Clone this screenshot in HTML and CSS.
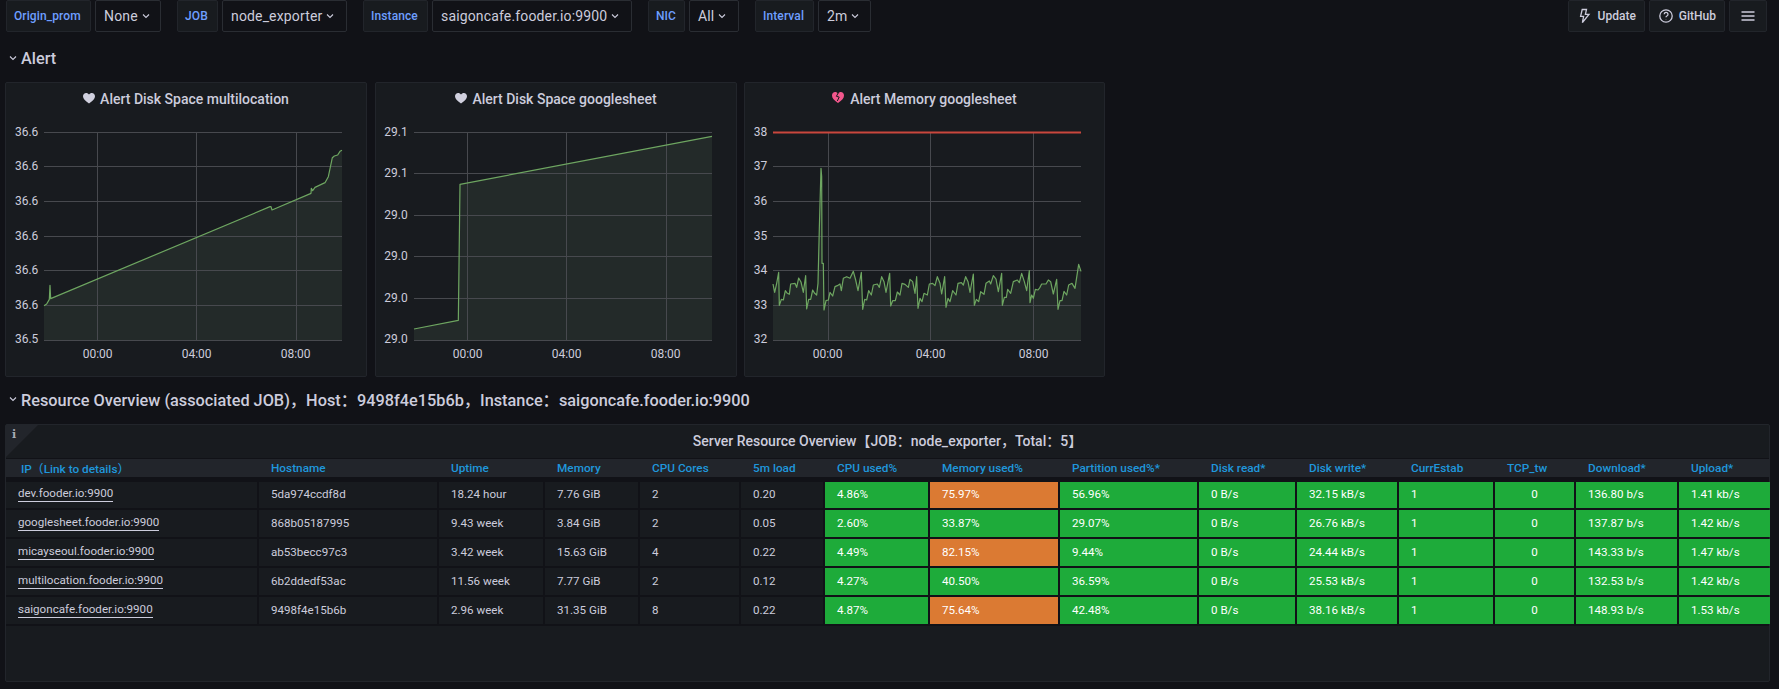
FILE: index.html
```html
<!DOCTYPE html>
<html lang="en">
<head>
<meta charset="utf-8">
<title>Node Exporter</title>
<link rel="stylesheet" href="styles.css">
</head>
<body>
<header class="toolbar">
  <div class="vars">
    <div class="var"><span class="var-label w85">Origin_prom</span><span class="var-value w66">None<svg class="caret" viewBox="0 0 10 10"><path d="M2 3.5 5 6.5 8 3.5"/></svg></span></div>
    <div class="var"><span class="var-label w41">JOB</span><span class="var-value w125">node_exporter<svg class="caret" viewBox="0 0 10 10"><path d="M2 3.5 5 6.5 8 3.5"/></svg></span></div>
    <div class="var"><span class="var-label w65">Instance</span><span class="var-value w200">saigoncafe.fooder.io:9900<svg class="caret" viewBox="0 0 10 10"><path d="M2 3.5 5 6.5 8 3.5"/></svg></span></div>
    <div class="var"><span class="var-label w37">NIC</span><span class="var-value w50">All<svg class="caret" viewBox="0 0 10 10"><path d="M2 3.5 5 6.5 8 3.5"/></svg></span></div>
    <div class="var"><span class="var-label w59">Interval</span><span class="var-value w53">2m<svg class="caret" viewBox="0 0 10 10"><path d="M2 3.5 5 6.5 8 3.5"/></svg></span></div>
  </div>
  <div class="links">
    <a class="link"><svg class="link-icon" viewBox="0 0 16 16"><path d="M9.5 1.5H5.2L3.6 8.3h3l-1.2 6.2 6.6-8.2H8.4z"/></svg>Update</a>
    <a class="link"><svg class="link-icon" viewBox="0 0 16 16"><circle cx="8" cy="8" r="6.2"/><path d="M6.2 6.3a1.9 1.9 0 1 1 2.7 1.7c-.6.3-.9.7-.9 1.3"/><path d="M8 11.2v.4"/></svg>GitHub</a>
    <a class="link link-menu"><svg class="link-icon" viewBox="0 0 16 16"><path d="M1.500 4h13M1.500 8h13M1.500 12h13"/></svg></a>
  </div>
</header>

<section class="row-title row-alert"><svg class="caret" viewBox="0 0 10 10"><path d="M2 3.5 5 6.5 8 3.5"/></svg>Alert</section>

<section class="panels">
  <article class="panel panel-a">
    <h3 class="panel-title"><svg class="heart" viewBox="0 0 12 10.500"><path d="M6 10.500C2 7.600 0 5.800 0 3.300 0 1.300 1.400 0 3.100 0 4.300 0 5.400.6 6 1.600 6.600.6 7.700 0 8.900 0 10.600 0 12 1.300 12 3.300 12 5.800 10 7.600 6 10.500z"/></svg>Alert Disk Space multilocation</h3>
    <svg class="chart" viewBox="18 114 1080 777">
      <path class="fill" d="M132 781V677L140 672 148 658 150 616 152 656 810 380 813 380 816 390 933 340 934 325 938 332 945 322 975 308 985 290 997 233 1003 228 1013 225 1020 214 1026 211V781Z"/>
      <path class="grid" d="M132 157.500H1026M132 259.500H1026M132 364.500H1026M132 469.500H1026M132 571.500H1026M132 676.500H1026M132 781.500H1026M292.500 156V781M589.500 156V781M889.500 156V781"/>
      <path class="line" d="M132 677 140 672 148 658 150 616 152 656 810 380 813 380 816 390 933 340 934 325 938 332 945 322 975 308 985 290 997 233 1003 228 1013 225 1020 214 1026 211"/>
      <g class="ylabels"><text x="115" y="168">36.6</text><text x="115" y="271">36.6</text><text x="115" y="376">36.6</text><text x="115" y="481">36.6</text><text x="115" y="583">36.6</text><text x="115" y="688">36.6</text><text x="115" y="790">36.5</text></g>
      <g class="xlabels"><text x="293" y="833">00:00</text><text x="590" y="833">04:00</text><text x="887" y="833">08:00</text></g>
    </svg>
  </article>
  <article class="panel panel-b">
    <h3 class="panel-title"><svg class="heart" viewBox="0 0 12 10.500"><path d="M6 10.500C2 7.600 0 5.800 0 3.300 0 1.300 1.400 0 3.100 0 4.300 0 5.400.6 6 1.600 6.600.6 7.700 0 8.900 0 10.600 0 12 1.300 12 3.300 12 5.800 10 7.600 6 10.500z"/></svg>Alert Disk Space googlesheet</h3>
    <svg class="chart" viewBox="18 114 1080 777">
      <path class="fill" d="M132 781V747L265 721 270 313 1026 169V781Z"/>
      <path class="grid" d="M132 157.500H1026M132 280.500H1026M132 406.500H1026M132 529.500H1026M132 655.500H1026M132 781.500H1026M292.500 156V781M589.500 156V781M889.500 156V781"/>
      <path class="line" d="M132 747 265 721 270 313 1026 169"/>
      <g class="ylabels"><text x="113" y="168">29.1</text><text x="113" y="292">29.1</text><text x="113" y="418">29.0</text><text x="113" y="541">29.0</text><text x="113" y="667">29.0</text><text x="113" y="790">29.0</text></g>
      <g class="xlabels"><text x="293" y="833">00:00</text><text x="590" y="833">04:00</text><text x="887" y="833">08:00</text></g>
    </svg>
  </article>
  <article class="panel panel-c">
    <h3 class="panel-title"><svg class="heart heart-broken" viewBox="0 0 12 11"><path d="M6 11C2 8 0 6.100 0 3.400 0 1.400 1.400 0 3.100 0 4.300 0 5.400.6 6 1.700 6.600.6 7.700 0 8.900 0 10.600 0 12 1.400 12 3.400 12 6.100 10 8 6 11z"/><path class="crack" d="M6.300 .8 4.400 4.300 7.200 5.100 5.300 9"/></svg>Alert Memory googlesheet</h3>
    <svg class="chart" viewBox="15 114 1077 777">
      <path class="fill" d="M99 781V612L104 637 110 610 116 577 118 676 124 658 130 660 136 632 142 640 148 643 152 612 165 610 170 622 176 594 183 606 190 637 197 587 200 687 206 658 212 658 218 630 224 640 230 645 234 610 238 445 243 265 245 290 246 550 250 550 252 690 258 662 265 660 270 637 278 648 285 620 292 617 300 612 304 632 310 595 320 590 330 595 340 574 347 600 354 632 364 577 368 688 374 658 380 660 386 632 394 645 400 615 412 612 418 622 425 590 432 605 438 637 449 580 452 678 458 662 466 662 472 636 480 645 486 610 495 613 505 622 510 598 518 605 525 640 530 590 534 685 540 655 546 665 552 640 562 645 568 612 578 610 585 617 592 590 600 610 605 642 614 590 618 682 624 655 630 665 638 632 648 645 654 610 664 608 670 615 677 590 684 605 690 637 700 582 703 676 709 658 716 665 722 635 732 643 738 610 748 603 752 612 760 587 768 597 775 635 785 580 787 676 793 652 799 652 803 628 812 640 820 605 832 600 838 608 845 580 853 605 860 632 868 572 870 668 875 645 880 655 886 628 894 630 900 622 905 612 918 612 925 600 932 605 940 642 950 598 954 688 960 662 966 662 972 634 980 645 986 615 996 610 1005 625 1016 553 1023 574V781Z"/>
      <path class="grid" d="M99 259.500H1023M99 364.500H1023M99 469.500H1023M99 571.500H1023M99 676.500H1023M99 781.500H1023M265.500 156V781M571.500 156V781M880.500 156V781"/>
      <path class="threshold" d="M99 157.500H1023"/>
      <path class="line" d="M99 612 104 637 110 610 116 577 118 676 124 658 130 660 136 632 142 640 148 643 152 612 165 610 170 622 176 594 183 606 190 637 197 587 200 687 206 658 212 658 218 630 224 640 230 645 234 610 238 445 243 265 245 290 246 550 250 550 252 690 258 662 265 660 270 637 278 648 285 620 292 617 300 612 304 632 310 595 320 590 330 595 340 574 347 600 354 632 364 577 368 688 374 658 380 660 386 632 394 645 400 615 412 612 418 622 425 590 432 605 438 637 449 580 452 678 458 662 466 662 472 636 480 645 486 610 495 613 505 622 510 598 518 605 525 640 530 590 534 685 540 655 546 665 552 640 562 645 568 612 578 610 585 617 592 590 600 610 605 642 614 590 618 682 624 655 630 665 638 632 648 645 654 610 664 608 670 615 677 590 684 605 690 637 700 582 703 676 709 658 716 665 722 635 732 643 738 610 748 603 752 612 760 587 768 597 775 635 785 580 787 676 793 652 799 652 803 628 812 640 820 605 832 600 838 608 845 580 853 605 860 632 868 572 870 668 875 645 880 655 886 628 894 630 900 622 905 612 918 612 925 600 932 605 940 642 950 598 954 688 960 662 966 662 972 634 980 645 986 615 996 610 1005 625 1016 553 1023 574"/>
      <g class="ylabels"><text x="82" y="168">38</text><text x="82" y="271">37</text><text x="82" y="376">36</text><text x="82" y="481">35</text><text x="82" y="583">34</text><text x="82" y="688">33</text><text x="82" y="790">32</text></g>
      <g class="xlabels"><text x="263" y="833">00:00</text><text x="572" y="833">04:00</text><text x="881" y="833">08:00</text></g>
    </svg>
  </article>
</section>

<section class="row-title row-resource"><svg class="caret" viewBox="0 0 10 10"><path d="M2 3.5 5 6.5 8 3.5"/></svg>Resource Overview (associated JOB)，Host：9498f4e15b6b，Instance：saigoncafe.fooder.io:9900</section>

<section class="table-panel">
  <div class="corner"><span class="corner-i">i</span></div>
  <h3 class="table-title">Server Resource Overview【JOB：node_exporter，Total：5】</h3>
  <div class="table">
    <div class="thead">
      <span class="th th-ip">IP（Link to details）</span><span class="th">Hostname</span><span class="th">Uptime</span><span class="th">Memory</span><span class="th">CPU Cores</span><span class="th">5m load</span><span class="th">CPU used%</span><span class="th">Memory used%</span><span class="th">Partition used%*</span><span class="th">Disk read*</span><span class="th">Disk write*</span><span class="th">CurrEstab</span><span class="th">TCP_tw</span><span class="th">Download*</span><span class="th">Upload*</span>
    </div>
    <div class="tr">
      <span class="td td-ip"><a>dev.fooder.io:9900</a></span><span class="td">5da974ccdf8d</span><span class="td">18.24 hour</span><span class="td">7.76 GiB</span><span class="td">2</span><span class="td">0.20</span><span class="td ok">4.86%</span><span class="td warn">75.97%</span><span class="td ok">56.96%</span><span class="td ok">0 B/s</span><span class="td ok">32.15 kB/s</span><span class="td ok">1</span><span class="td ok mid">0</span><span class="td ok">136.80 b/s</span><span class="td ok">1.41 kb/s</span>
    </div>
    <div class="tr">
      <span class="td td-ip"><a>googlesheet.fooder.io:9900</a></span><span class="td">868b05187995</span><span class="td">9.43 week</span><span class="td">3.84 GiB</span><span class="td">2</span><span class="td">0.05</span><span class="td ok">2.60%</span><span class="td ok">33.87%</span><span class="td ok">29.07%</span><span class="td ok">0 B/s</span><span class="td ok">26.76 kB/s</span><span class="td ok">1</span><span class="td ok mid">0</span><span class="td ok">137.87 b/s</span><span class="td ok">1.42 kb/s</span>
    </div>
    <div class="tr">
      <span class="td td-ip"><a>micayseoul.fooder.io:9900</a></span><span class="td">ab53becc97c3</span><span class="td">3.42 week</span><span class="td">15.63 GiB</span><span class="td">4</span><span class="td">0.22</span><span class="td ok">4.49%</span><span class="td warn">82.15%</span><span class="td ok">9.44%</span><span class="td ok">0 B/s</span><span class="td ok">24.44 kB/s</span><span class="td ok">1</span><span class="td ok mid">0</span><span class="td ok">143.33 b/s</span><span class="td ok">1.47 kb/s</span>
    </div>
    <div class="tr">
      <span class="td td-ip"><a>multilocation.fooder.io:9900</a></span><span class="td">6b2ddedf53ac</span><span class="td">11.56 week</span><span class="td">7.77 GiB</span><span class="td">2</span><span class="td">0.12</span><span class="td ok">4.27%</span><span class="td ok">40.50%</span><span class="td ok">36.59%</span><span class="td ok">0 B/s</span><span class="td ok">25.53 kB/s</span><span class="td ok">1</span><span class="td ok mid">0</span><span class="td ok">132.53 b/s</span><span class="td ok">1.42 kb/s</span>
    </div>
    <div class="tr">
      <span class="td td-ip"><a>saigoncafe.fooder.io:9900</a></span><span class="td">9498f4e15b6b</span><span class="td">2.96 week</span><span class="td">31.35 GiB</span><span class="td">8</span><span class="td">0.22</span><span class="td ok">4.87%</span><span class="td warn">75.64%</span><span class="td ok">42.48%</span><span class="td ok">0 B/s</span><span class="td ok">38.16 kB/s</span><span class="td ok">1</span><span class="td ok mid">0</span><span class="td ok">148.93 b/s</span><span class="td ok">1.53 kb/s</span>
    </div>
  </div>
</section>
</body>
</html>
```
FILE: styles.css
```css
* { box-sizing: border-box; }
html, body { margin: 0; padding: 0; }
body {
  width: 1779px;
  height: 689px;
  overflow: hidden;
  background: #111217;
  color: #ccccdc;
  font-family: Roboto, "Noto Sans CJK SC", sans-serif;
  font-size: 14px;
}
.toolbar {
  display: flex;
  justify-content: space-between;
  height: 32px;
  padding: 0 12px 0 6px;
}
.vars { display: flex; gap: 16px; }
.var { display: flex; gap: 4px; }
.w37 { width: 37px; }
.w41 { width: 41px; }
.w50 { width: 50px; }
.w53 { width: 53px; }
.w59 { width: 59px; }
.w65 { width: 65px; }
.w66 { width: 66px; }
.w85 { width: 85px; }
.w125 { width: 125px; }
.w200 { width: 200px; }
.var-label {
  display: flex;
  align-items: center;
  padding-left: 7px;
  background: #181b1f;
  border: 1px solid #22252b;
  border-radius: 2px;
  color: #6e9fff;
  font-size: 12px;
  font-weight: 500;
  letter-spacing: .1px;
  white-space: nowrap;
}
.var-value {
  display: flex;
  align-items: center;
  gap: 3px;
  padding-left: 8px;
  background: #111217;
  border: 1px solid #2a2d33;
  border-radius: 2px;
  color: #ccccdc;
  font-size: 14px;
  letter-spacing: .15px;
  white-space: nowrap;
}
.caret {
  width: 10px;
  height: 10px;
  fill: none;
  stroke: #ccccdc;
  stroke-width: 1.100;
}
.links { display: flex; gap: 4px; }
.link {
  display: flex;
  align-items: center;
  gap: 5px;
  padding: 0 8px;
  background: #181b1f;
  border: 1px solid #22252b;
  border-radius: 2px;
  color: #ccccdc;
  font-size: 12px;
  font-weight: 500;
}
.link-menu { width: 38px; justify-content: center; }
.link-icon {
  width: 16px;
  height: 16px;
  fill: none;
  stroke: #ccccdc;
  stroke-width: 1.300;
}
.row-title {
  display: flex;
  align-items: center;
  gap: 3px;
  padding-left: 8px;
  color: #ccccdc;
  font-size: 16.300px;
  font-weight: 500;
}
.row-alert { height: 26px; margin-top: 13px; }
.row-resource { height: 26px; margin-top: 9px; }
.panels { display: flex; gap: 8px; padding-left: 5px; margin-top: 11px; }
.panel {
  width: 362px;
  height: 295px;
  background: #181b1f;
  border: 1px solid #22252b;
  border-radius: 2px;
}
.panel-c { width: 361px; margin-left: -1px; }
.panel-title {
  display: flex;
  align-items: center;
  justify-content: center;
  gap: 5px;
  height: 35px;
  padding-bottom: 3px;
  margin: 0;
  color: #ccccdc;
  font-size: 14px;
  font-weight: 500;
}
.heart { width: 12px; height: 10.500px; margin-top: -1px; fill: #d0d0de; }
.heart-broken { height: 11px; margin-top: -4px; margin-right: 1px; fill: #f2578c; }
.crack { fill: none; stroke: #181b1f; stroke-width: 1; }
.chart { display: block; width: 360px; height: 259px; }
.panel-c .chart { width: 359px; }
.fill { fill: #232a29; stroke: none; }
.grid { fill: none; stroke: #47494e; stroke-width: 3; }
.line { fill: none; stroke: #6ea661; stroke-width: 3.600; stroke-linejoin: round; }
.threshold { fill: none; stroke: #c9473d; stroke-width: 6; }
.ylabels text, .xlabels text { fill: #ccccdc; font-family: Roboto, sans-serif; font-size: 36px; }
.ylabels { text-anchor: end; }
.xlabels { text-anchor: middle; }
.table-panel {
  position: relative;
  width: 1765px;
  height: 258px;
  margin: 12px 0 0 5px;
  background: #181b1f;
  border: 1px solid #22252b;
  border-radius: 2px;
}
.corner {
  position: absolute;
  top: 0;
  left: 0;
  width: 0;
  height: 0;
  border-style: solid;
  border-width: 16px;
  border-color: #22252b transparent transparent #22252b;
}
.corner-i {
  position: absolute;
  top: -11px;
  left: -10px;
  color: #a9abb5;
  font-family: "DejaVu Serif", serif;
  font-size: 11px;
  font-weight: 700;
  line-height: 10px;
}
.table-title {
  display: flex;
  align-items: center;
  justify-content: center;
  height: 33px;
  padding-bottom: 3px;
  margin: 0;
  font-size: 14px;
  font-weight: 500;
  color: #ccccdc;
}
.table { padding: 1px 0 2px; background: #111217; }
.thead, .tr {
  display: grid;
  grid-template-columns: 251px 178px 104px 93px 99px 82px 103px 128px 137px 96px 100px 94px 79px 101px 91px;
  column-gap: 2px;
}
.thead { height: 18px; margin-bottom: 5px; background: #22252b; }
.tr { height: 27px; margin-bottom: 2px; }
.thead + .tr { height: 26px; }
.tr:last-child { margin-bottom: 0; }
.th {
  display: flex;
  align-items: center;
  padding: 0 0 2px 12px;
  color: #1f97dc;
  font-size: 11.800px;
  font-weight: 500;
}
.th-ip { padding-left: 15px; }
.td {
  display: flex;
  align-items: center;
  padding: 0 0 2px 12px;
  background: #181b1f;
  color: #ccccdc;
  font-size: 11.600px;
}
.td-ip a { border-bottom: 1px solid #ccccdc; padding-bottom: 1px; }
.ok { background: #1eab3a; color: #fff; }
.warn { background: #db7a33; color: #fff; }
.mid { justify-content: center; padding-left: 0; }
```
